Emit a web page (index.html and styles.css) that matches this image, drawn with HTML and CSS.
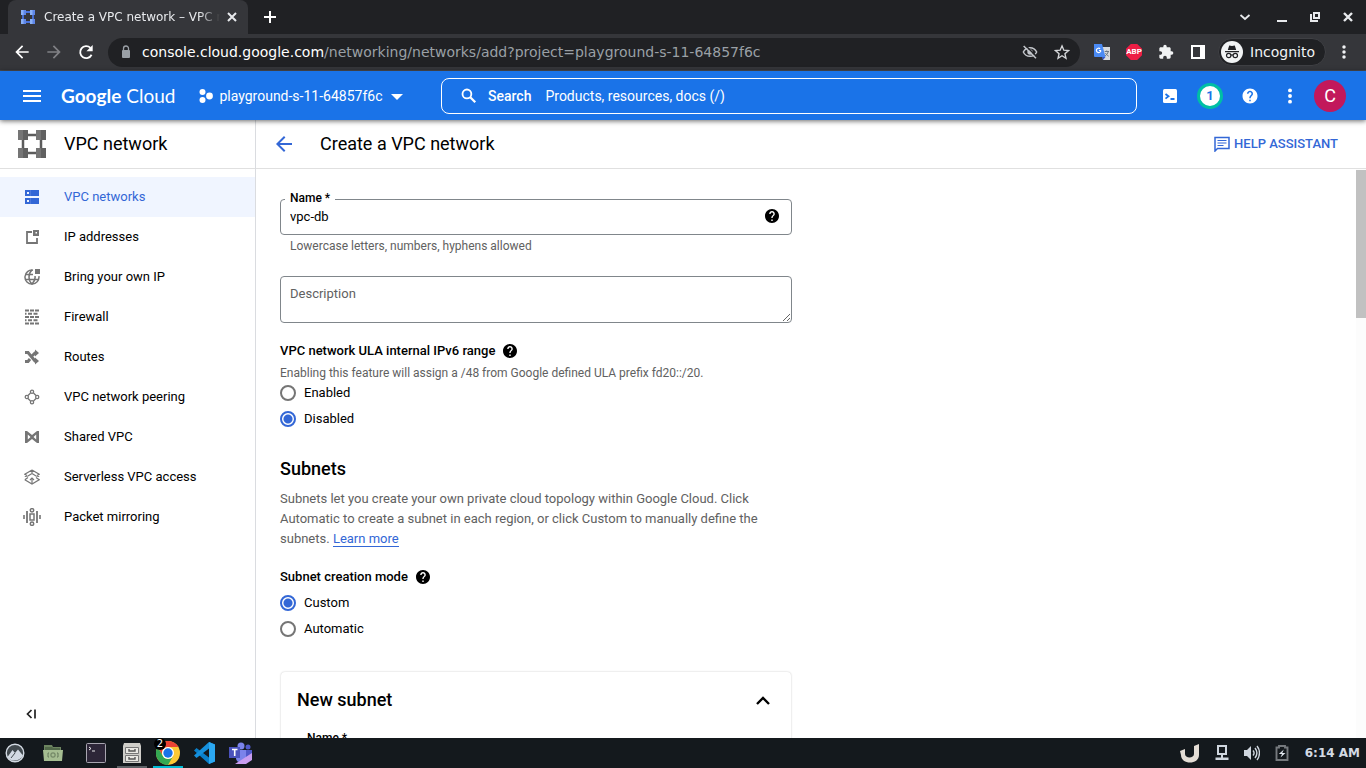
FILE: index.html
```html
<!DOCTYPE html>
<html lang="en">
<head>
<meta charset="utf-8">
<title>Create a VPC network – VPC network</title>
<link rel="stylesheet" href="styles.css">
</head>
<body>
<svg class="defs" aria-hidden="true">
  <symbol id="help" viewBox="0 0 24 24"><path d="M12 2C6.48 2 2 6.48 2 12s4.48 10 10 10 10-4.48 10-10S17.52 2 12 2zm1 17h-2v-2h2v2zm2.07-7.75-.9.92C13.45 12.9 13 13.5 13 15h-2v-.5c0-1.1.45-2.1 1.17-2.83l1.24-1.26c.37-.36.59-.86.59-1.41 0-1.1-.9-2-2-2s-2 .9-2 2H8c0-2.21 1.79-4 4-4s4 1.79 4 4c0 .88-.36 1.68-.93 2.25z" fill="currentColor" stroke="none"/></symbol>
  <symbol id="help-tight" viewBox="2 2 20 20"><path d="M12 2C6.48 2 2 6.48 2 12s4.48 10 10 10 10-4.48 10-10S17.52 2 12 2zm1 17h-2v-2h2v2zm2.07-7.75-.9.92C13.45 12.9 13 13.5 13 15h-2v-.5c0-1.1.45-2.1 1.17-2.83l1.24-1.26c.37-.36.59-.86.59-1.41 0-1.1-.9-2-2-2s-2 .9-2 2H8c0-2.21 1.79-4 4-4s4 1.79 4 4c0 .88-.36 1.68-.93 2.25z"/></symbol>
  <symbol id="back" viewBox="0 0 24 24"><path d="M20 11H7.83l5.59-5.59L12 4l-8 8 8 8 1.41-1.41L7.83 13H20z"/></symbol>
  <symbol id="dots" viewBox="0 0 24 24"><circle cx="12" cy="4.500" r="2.600"/><circle cx="12" cy="12" r="2.600"/><circle cx="12" cy="19.500" r="2.600"/></symbol>
</svg>

<div class="tabstrip">
  <div class="tab">
    <svg class="i16" viewBox="0 0 16 16"><path d="M3 3h10v10H3z" fill="none" stroke="#4a72dc" stroke-width="1.800"/><g fill="#8ab0f7"><path d="M1 1h5v5H1zM10 1h5v5h-5zM1 10h5v5H1zM10 10h5v5h-5z"/></g><g fill="#5f87e8"><path d="M3.500 1H6v5H3.500zM12.500 1H15v5h-2.500zM3.500 10H6v5H3.500zM12.500 10H15v5h-2.500z"/></g></svg>
    <span class="tab-title">Create a VPC network – VPC network</span>
    <button class="bare" aria-label="Close tab"><svg class="i12" viewBox="0 0 12 12"><path d="m2 2 8 8M10 2l-8 8" fill="none" stroke="#e8eaed" stroke-width="2"/></svg></button>
  </div>
  <button class="bare new-tab" aria-label="New tab"><svg class="i12" viewBox="0 0 12 12"><path d="M6 0v12M0 6h12" fill="none" stroke="#fff" stroke-width="2"/></svg></button>
  <div class="window-buttons">
    <button class="bare tab-search" aria-label="Search tabs"><svg class="i12" viewBox="0 0 12 12"><path d="m1.500 4 4.500 4 4.500-4" fill="none" stroke="#e8eaed" stroke-width="1.800"/></svg></button>
    <button class="bare" aria-label="Minimize"><svg class="i12" viewBox="0 0 12 12"><path d="M1 9h10v2H1z"/></svg></button>
    <button class="bare" aria-label="Restore"><svg class="i12" viewBox="0 0 12 12"><path d="M2 3v7h7" fill="none" stroke="#e8eaed" stroke-width="2"/><path d="M5 2h5v5H5z" fill="none" stroke="#e8eaed" stroke-width="2"/></svg></button>
    <button class="bare" aria-label="Close"><svg class="i12" viewBox="0 0 12 12"><path d="m2 2 8 8M10 2l-8 8" fill="none" stroke="#e8eaed" stroke-width="2.400"/></svg></button>
  </div>
</div>

<div class="toolbar">
  <div class="nav-buttons">
    <button class="bare" aria-label="Back"><svg class="i20" viewBox="0 0 24 24"><use href="#back"/></svg></button>
    <button class="bare dim" aria-label="Forward"><svg class="i20" viewBox="0 0 24 24"><path d="M4 11h12.170l-5.590-5.590L12 4l8 8-8 8-1.410-1.410L16.170 13H4z"/></svg></button>
    <button class="bare" aria-label="Reload"><svg class="i20" viewBox="0 0 24 24"><path d="M18.700 15.300A7.200 7.200 0 1 1 17.300 7" fill="none" stroke="#fff" stroke-width="2.200"/><path d="M20 3.500V11h-7.500z" fill="#fff"/></svg></button>
  </div>
  <div class="address">
    <svg class="i16" viewBox="0 0 16 16"><path d="M5 6h6a1 1 0 0 1 1 1v6a1 1 0 0 1-1 1H5a1 1 0 0 1-1-1V7a1 1 0 0 1 1-1z" fill="#9aa0a6"/><path d="M5.500 7V4.500a2.500 2.500 0 0 1 5 0V7" fill="none" stroke="#9aa0a6" stroke-width="1.300"/></svg>
    <span class="url"><b>console.cloud.google.com</b>/networking/networks/add?project=playground-s-11-64857f6c</span>
    <button class="bare muted" aria-label="Third-party cookies blocked"><svg class="i16" viewBox="0 0 24 24"><path d="M12 5.500c4.500 0 8.200 2.600 10 6.500-1.800 3.900-5.500 6.500-10 6.500S3.800 15.900 2 12c1.800-3.900 5.500-6.500 10-6.500z" fill="none" stroke="#c4c7cc" stroke-width="2.200"/><circle cx="12" cy="12" r="4"/><path d="m4.500 1.500 18 18" stroke="#202124" stroke-width="2.500"/><path d="m2.500 3 18.500 18.500" stroke="#c4c7cc" stroke-width="2.200"/></svg></button>
    <button class="bare muted" aria-label="Bookmark this tab"><svg class="i16" viewBox="0 0 24 24"><path d="m12 2.800 2.700 6.500 7 .600-5.300 4.600 1.600 6.900-6-3.700-6 3.700 1.600-6.900-5.300-4.600 7-.600z" fill="none" stroke="#d5d7da" stroke-width="2"/></svg></button>
  </div>
  <div class="extensions">
    <button class="bare" aria-label="Translate"><svg class="i16" viewBox="0 0 16 16"><path d="M7 3h9v13H9z" fill="#d8dadd"/><path d="M0 0h8l3.500 13H1a1 1 0 0 1-1-1z" fill="#4a8af4"/><path d="M8 13h3.500L9 16z" fill="#3457c8"/><path d="M6.800 6.400a2.200 2.200 0 1 1-.7-1.600M7 6.500H5" fill="none" stroke="#fff" stroke-width="1.200"/><path d="M10.700 7.500h4.300M12.700 6.500v1M14.200 7.700c-.5 2-1.500 3.200-3 4M11.500 9c.7 1.500 1.500 2.300 3.200 3.200" fill="none" stroke="#6b7784"/></svg></button>
    <button class="bare abp" aria-label="Adblock Plus">ABP</button>
    <button class="bare" aria-label="Extensions"><svg class="i16" viewBox="0 0 24 24"><path d="M20.500 11H19V7c0-1.100-.9-2-2-2h-4V3.500a2.500 2.500 0 0 0-5 0V5H4c-1.100 0-1.990.9-1.990 2v3.800H3.500c1.490 0 2.700 1.210 2.700 2.700s-1.210 2.700-2.700 2.700H2V20c0 1.100.9 2 2 2h3.800v-1.500c0-1.490 1.210-2.700 2.700-2.700s2.700 1.210 2.700 2.700V22H17c1.100 0 2-.9 2-2v-4h1.500a2.500 2.500 0 0 0 0-5z"/></svg></button>
    <button class="bare" aria-label="Side panel"><svg class="i16" viewBox="0 0 16 16"><path d="M2 2h12v12H2z" fill="none" stroke="#fff" stroke-width="2"/><path d="M10 2h4v12h-4z" fill="#fff"/></svg></button>
  </div>
  <button class="bare incognito"><svg class="i22" viewBox="0 0 22 22"><circle cx="11" cy="11" r="11" fill="#f1f3f4"/><path d="M4 10h14v1.200H4zM6.800 9l1.400-4.500 2.800.6 2.800-.6L15.200 9z" fill="#202124"/><g fill="none" stroke="#202124" stroke-width="1.200"><circle cx="7.700" cy="14.500" r="2.200"/><circle cx="14.300" cy="14.500" r="2.200"/><path d="M9.900 14.200c.800-.5 1.400-.5 2.200 0"/></g></svg>Incognito</button>
  <button class="bare" aria-label="Browser menu"><svg class="i16" viewBox="0 0 24 24"><use href="#dots"/></svg></button>
</div>

<header class="app-bar">
  <div class="brand">
    <button class="bare" aria-label="Navigation menu"><svg class="i24" viewBox="0 0 24 24"><path d="M3 6h18v2H3zM3 11h18v2H3zM3 16h18v2H3z"/></svg></button>
    <a class="logo" href="#"><b>Google</b> Cloud</a>
    <button class="bare project"><svg class="i16" viewBox="0 0 16 16"><circle cx="4.500" cy="4" r="3"/><circle cx="4.500" cy="12" r="3"/><circle cx="11.500" cy="8" r="3.400"/></svg>playground-s-11-64857f6c<svg class="i12" viewBox="0 0 12 12"><path d="M0 4h12L6 10z"/></svg></button>
  </div>
  <div class="search">
    <svg class="i20" viewBox="0 0 24 24"><circle cx="9.500" cy="9.500" r="5.300" fill="none" stroke="#fff" stroke-width="2.200"/><path d="m13.500 13.500 6 6" stroke="#fff" stroke-width="2.800"/></svg>
    <label for="search">Search</label>
    <input id="search" type="text" placeholder="Products, resources, docs (/)">
  </div>
  <div class="actions">
    <button class="bare" aria-label="Cloud Shell"><svg class="i18" viewBox="0 0 18 18"><rect x="2" y="2" width="14" height="14" rx="1.500"/><path d="m4.500 7 3 2.300-3 2.300M9.500 12h4" fill="none" stroke="#1a73e8" stroke-width="1.800"/></svg></button>
    <button class="bare" aria-label="Notifications"><span class="count">1</span></button>
    <button class="bare" aria-label="Help"><svg class="i18" viewBox="0 0 24 24"><use href="#help"/></svg></button>
    <button class="bare" aria-label="More options"><svg class="i18" viewBox="0 0 24 24"><use href="#dots"/></svg></button>
    <button class="bare" aria-label="Account"><span class="avatar">C</span></button>
  </div>
</header>

<div class="workspace">
  <aside class="sidebar">
    <div class="product">
      <svg class="i28" viewBox="0 0 28 28"><path d="M5 5h18v18H5z" fill="none" stroke="#5c5c5c" stroke-width="2.500"/><path d="M0 0h10v10H0zM18 0h10v10H18zM0 18h10v10H0zM18 18h10v10H18z" fill="#757575"/><path d="M5 0h5v10H5zM23 0h5v10h-5zM5 18h5v10H5zM23 18h5v10h-5z" fill="#616161"/></svg>
      <span>VPC network</span>
    </div>
    <nav class="menu">
      <a class="active" href="#"><svg class="i16" viewBox="0 0 16 16"><path fill-rule="evenodd" d="M1 1h14v6H1zM3 3v2h2V3zM1 9h14v6H1zM3 11v2h2v-2z"/><path d="M6.500 1v6M6.500 9v6" stroke="#4c79dc" stroke-width="1"/></svg>VPC networks</a>
      <a href="#"><svg class="i16" viewBox="0 0 16 16"><path d="M8 3H3v11h10V9" fill="none" stroke="#757575" stroke-width="1.800"/><path fill-rule="evenodd" d="M9 1h6v6H9zM11.500 3v1.500H13V3z"/></svg>IP addresses</a>
      <a href="#"><svg class="i16" viewBox="0 0 16 16"><g fill="none" stroke="#757575" stroke-width="1.500"><path d="M9 1.200a7 7 0 1 0 5.900 6"/><path d="M8 1c-4 3.500-4 10.500 0 14 2.500-2.500 3.500-5 3-8M1.500 5.500H9M1.500 10.500h13"/></g><path d="M11 0h5v5h-5z"/></svg>Bring your own IP</a>
      <a href="#"><svg class="i16" viewBox="0 0 16 16"><path d="M1 1.500h4M6 1.500h4M11 1.500h4M1 4.800h1.500M4 4.800h4M9.500 4.800h4M1 8h4M6 8h4M11 8h4M1 11.200h1.500M4 11.200h4M9.500 11.200h4M1 14.500h4M6 14.500h4M11 14.500h4" fill="none" stroke="#757575" stroke-width="1.900"/></svg>Firewall</a>
      <a href="#"><svg class="i16" viewBox="0 0 16 16"><path d="M1 3.500h3l7 8.500h1M1 12.500h3l2-2.500M8.500 6.500 11 4h1" fill="none" stroke="#757575" stroke-width="3"/><path d="m11 .5 4 3.500-4 3.500zM11 8.500l4 3.500-4 3.500z"/></svg>Routes</a>
      <a href="#"><svg class="i16" viewBox="0 0 16 16"><g fill="none" stroke="#757575" stroke-width="1.300"><circle cx="8" cy="2.800" r="1.600"/><circle cx="8" cy="13.200" r="1.600"/><circle cx="2.800" cy="8" r="1.600"/><circle cx="13.200" cy="8" r="1.600"/><path d="M6.500 4 4 6.500M9.500 4 12 6.500M4 9.500 6.500 12M12 9.500 9.500 12"/></g></svg>VPC network peering</a>
      <a href="#"><svg class="i16" viewBox="0 0 16 16"><path fill-rule="evenodd" d="M1 2h2l5 4 5-4h2v12h-2l-5-4-5 4H1zM3.800 5.500v5L6.500 8zM12.200 5.500v5L9.500 8z"/></svg>Shared VPC</a>
      <a href="#"><svg class="i16" viewBox="0 0 16 16"><g fill="none" stroke="#757575" stroke-width="1.200"><path d="M8 1 .8 5.300 3 6.500M8 1l7.200 4.300L13 6.500M.8 10.700 8 15l7.200-4.300L12 8.500M.8 10.700 4 8.500M.8 7.500 4 7l4-2.500L12 7l3.200.5M8 1v3.500M8 14V9"/><path d="M6 11l2-2 2 2"/></g></svg>Serverless VPC access</a>
      <a href="#"><svg class="i18" viewBox="0 0 18 18"><g fill="none" stroke="#757575"><path d="M1 7v4M17 7v4" stroke-width="1.600"/><path d="M4 3v12M14 3v12" stroke-width="1.800"/><rect x="7" y="6" width="4" height="6" stroke-width="1.500"/><circle cx="9" cy="2.300" r="1.700" stroke-width="1.500"/><circle cx="9" cy="15.700" r="1.700" stroke-width="1.500"/></g></svg>Packet mirroring</a>
    </nav>
    <button class="bare collapse" aria-label="Collapse menu"><svg class="i12" viewBox="0 0 12 12"><path d="M6.500 2 2.500 6l4 4M10 1.500v9" fill="none" stroke="#212121" stroke-width="1.700"/></svg></button>
  </aside>

  <main class="main">
    <div class="page-head">
      <button class="bare" aria-label="Go back"><svg class="i24" viewBox="0 0 24 24"><use href="#back"/></svg></button>
      <h1>Create a VPC network</h1>
      <button class="bare assist"><svg class="i16" viewBox="0 0 16 16"><path d="M1 1.500h14v11H3.500L1 15z" fill="none" stroke="#3367d6" stroke-width="1.500"/><path d="M3.500 4.500h9M3.500 7h9M3.500 9.500h6" stroke="#3367d6" stroke-width="1.200"/></svg>HELP ASSISTANT</button>
    </div>
    <div class="scroller">
      <form class="form">
        <div class="field">
          <label for="name">Name *</label>
          <input id="name" type="text" value="vpc-db">
          <svg class="i14 field-help"><use href="#help-tight"/></svg>
        </div>
        <p class="hint">Lowercase letters, numbers, hyphens allowed</p>
        <textarea class="description" aria-label="Description" placeholder="Description"></textarea>

        <fieldset>
          <legend>VPC network ULA internal IPv6 range <svg class="i14"><use href="#help-tight"/></svg></legend>
          <p class="note">Enabling this feature will assign a /48 from Google defined ULA prefix fd20::/20.</p>
          <label class="option"><input type="radio" name="ula"> Enabled</label>
          <label class="option"><input type="radio" name="ula" checked> Disabled</label>
        </fieldset>

        <h2 class="section">Subnets</h2>
        <p class="text">Subnets let you create your own private cloud topology within Google Cloud. Click Automatic to create a subnet in each region, or click Custom to manually define the subnets. <a href="#">Learn more</a></p>

        <fieldset>
          <legend>Subnet creation mode <svg class="i14"><use href="#help-tight"/></svg></legend>
          <label class="option"><input type="radio" name="mode" checked> Custom</label>
          <label class="option"><input type="radio" name="mode"> Automatic</label>
        </fieldset>

        <section class="card">
          <div class="card-head">
            <h2>New subnet</h2>
            <button type="button" class="bare" aria-label="Collapse subnet"><svg class="i24" viewBox="0 0 24 24"><path d="m6 16 6-6 6 6" fill="none" stroke="#000" stroke-width="2.400"/></svg></button>
          </div>
          <div class="field">
            <label for="subnet-name">Name *</label>
            <input id="subnet-name" type="text">
          </div>
        </section>
      </form>
      <div class="scrollbar"><div class="thumb"></div></div>
    </div>
  </main>
</div>

<footer class="taskbar">
  <button class="bare start" aria-label="Menu"><svg class="i20" viewBox="0 0 20 20"><circle cx="10" cy="10" r="8.800" fill="#41494e" stroke="#d3dae3" stroke-width="1.400"/><path d="m2.500 14 5-7 2.500 3 3-3.500 5 6c-3 6-12 7-15.500 1.500z" fill="#d3dae3"/><path d="m6 15 4-5" stroke="#41494e" stroke-width="1"/></svg></button>
  <button class="bare files" aria-label="Files"><svg class="i20" viewBox="0 0 20 20"><path d="M1 2h8l1 2h8v14H1z" fill="#6d8560"/><path d="M2 4h7l1 1h7v2H2z" fill="#52694a"/><path d="M0 7h20l-1 11H1z" fill="#a5bd91"/><path d="M6 10H5v4h1M14 10h1v4h-1" fill="none" stroke="#65795a"/><rect x="8" y="10" width="4" height="4" rx="1" fill="none" stroke="#65795a"/></svg></button>
  <div class="tasks">
    <button class="bare" aria-label="Terminal"><svg class="i20" viewBox="0 0 20 20"><rect x=".5" y=".5" width="19" height="19" rx="1" fill="#2d2638" stroke="#a8a5b0"/><path d="m3 4 2 1.500L3 7M6 8h3" fill="none" stroke="#fff" stroke-width=".9"/></svg></button>
    <button class="bare open" aria-label="File manager"><svg class="i20" viewBox="0 0 20 20"><path d="M2 0h16l1 3v17H1V3z" fill="#cfcec9"/><g fill="#e9e8e3" stroke="#777"><path d="M3.500 4.500h13v6h-13zM3.500 12.500h13v6h-13z"/></g><path d="M7 6v2h6V6M7 14v2h6v-2" fill="none" stroke="#555" stroke-width="1.400"/></svg></button>
    <button class="bare open current" aria-label="Chrome, 2 windows"><svg class="i24" viewBox="0 0 24 24"><circle cx="12" cy="12" r="12" fill="#fcc934"/><path d="M1.600 6a12 12 0 0 1 20.800 0H12a6 6 0 0 0-5.200 9z" fill="#ea4335"/><path d="M1.600 6 6.800 15A6 6 0 0 0 17.200 15L12 24A12 12 0 0 1 1.600 6z" fill="#34a853"/><circle cx="12" cy="12" r="6" fill="#fff"/><circle cx="12" cy="12" r="4.700" fill="#1a73e8"/></svg><span class="badge">2</span></button>
    <button class="bare" aria-label="Visual Studio Code"><svg class="i22" viewBox="0 0 22 22"><path fill-rule="evenodd" d="m16 0 6 2.500v17L16 22 1 8.500 3.500 6 16 15.500z" fill="#0a7fc9"/><path d="M16 0v6.500L3.500 16 1 13.500z" fill="#1590dd"/><path d="m16 0 6 2.500v17L16 22z" fill="#2ba8f1"/></svg></button>
    <button class="bare" aria-label="Teams"><svg class="i24" viewBox="0 0 24 24"><circle cx="13" cy="5" r="3.500" fill="#7b83eb"/><circle cx="20" cy="6" r="2.500" fill="#5059c9"/><path d="M16 9h8v7c0 3-4 5-7 3z" fill="#5059c9"/><path d="M8 9h10v8c0 6-10 6-10 0z" fill="#7b83eb"/><path d="M1 6h11v11H1z" fill="#4b53bc"/><path d="M4 8.500h5.500M6.700 8.500v6.500" stroke="#fff" stroke-width="1.600"/><path d="m7 23 17-11v7l-6 4z" fill="#c99df0"/></svg></button>
  </div>
  <div class="tray">
    <svg class="i20" viewBox="0 0 20 20"><path d="M0 8l5-2v5c0 4.500 9 4.500 9 0V3l5-2v11c0 10-18 10-18 0z" fill="#e4ddd5"/></svg>
    <svg class="i16" viewBox="0 0 16 16"><path d="M4 1h8v8H4z" fill="none" stroke="#cfd6de" stroke-width="2"/><path d="M7 10h2v3H7zM1.500 12.500h13V15h-13z" fill="#cfd6de"/></svg>
    <svg class="i16" viewBox="0 0 16 16"><path d="M0 5h3l4-4v14l-4-4H0z" fill="#cfd6de"/><path d="M9 5.500c1.300 1.500 1.300 3.500 0 5M11 3c2.300 3 2.300 7 0 10M13 1c3.300 4 3.300 10 0 14" fill="none" stroke="#cfd6de" stroke-width="1.400"/></svg>
    <svg class="i16" viewBox="0 0 16 16"><path d="M3 2.500h2V1h6v1.500h2.500V15h-11V2.500z" fill="none" stroke="#75797d" stroke-width="1.900"/><path d="M9.800 4.500 4.800 9H8l-1.500 3.500L11.500 8H8.300z" fill="#dfe5ec"/></svg>
    <time>6:14 AM</time>
  </div>
</footer>
</body>
</html>
```
FILE: styles.css
```css
* { box-sizing: border-box; }

body {
  margin: 0;
  height: 100vh;
  display: flex;
  flex-direction: column;
  overflow: hidden;
  font: 13px/20px Roboto, "Liberation Sans", sans-serif;
  color: #000;
  background: #fff;
}

h1, h2, p { margin: 0; font-weight: 400; }
a { color: inherit; text-decoration: none; }
svg { display: block; flex: none; fill: currentColor; }
.defs { display: none; }

.i12 { width: 12px; height: 12px; }
.i14 { width: 14px; height: 14px; }
.i16 { width: 16px; height: 16px; }
.i18 { width: 18px; height: 18px; }
.i20 { width: 20px; height: 20px; }
.i22 { width: 22px; height: 22px; }
.i24 { width: 24px; height: 24px; }
.i28 { width: 28px; height: 28px; }

.bare {
  display: flex;
  align-items: center;
  justify-content: center;
  flex: none;
  padding: 0;
  border: 0;
  background: none;
  color: inherit;
  font: inherit;
}

/* Browser tabs */
.tabstrip {
  display: flex;
  align-items: center;
  flex: none;
  height: 34px;
  padding: 0 12px 0 8px;
  background: #202124;
  color: #e8eaed;
  font: 12px/16px "DejaVu Sans", sans-serif;
}
.tab {
  display: flex;
  align-items: center;
  width: 240px;
  height: 34px;
  padding: 0 10px 0 12px;
  border-radius: 8px 8px 0 0;
  background: #35363a;
}
.tab-title {
  flex: 1;
  min-width: 0;
  margin: 0 6px 0 8px;
  overflow: hidden;
  white-space: nowrap;
  -webkit-mask-image: linear-gradient(90deg, #000 88%, transparent);
  mask-image: linear-gradient(90deg, #000 88%, transparent);
}
.new-tab { margin-left: 16px; color: #fff; }
.window-buttons { display: flex; gap: 21px; margin-left: auto; }
.tab-search { margin-right: 4px; }

/* Browser toolbar */
.toolbar {
  display: flex;
  align-items: center;
  flex: none;
  height: 37px;
  padding: 0 14px 0 12px;
  border-bottom: 1px solid #4b4c50;
  background: #35363a;
  color: #f1f3f4;
  font: 14px/20px "DejaVu Sans", sans-serif;
}
.nav-buttons { display: flex; gap: 12px; color: #fff; }
.dim { color: #808185; }
.address {
  display: flex;
  align-items: center;
  flex: 1;
  min-width: 0;
  gap: 16px;
  height: 29px;
  margin: 0 14px 0 12px;
  padding: 0 10px;
  border-radius: 16px;
  background: #202124;
}
.url {
  flex: 1;
  min-width: 0;
  margin-left: -8px;
  overflow: hidden;
  white-space: nowrap;
  color: #9aa0a6;
}
.url b { font-weight: 400; color: #fff; }
.muted { color: #c4c7cc; }
.extensions { display: flex; align-items: center; gap: 16px; margin-right: 12px; }
.abp {
  width: 16px;
  height: 16px;
  background: #ed1e45;
  clip-path: polygon(30% 0, 70% 0, 100% 30%, 100% 70%, 70% 100%, 30% 100%, 0 70%, 0 30%);
  color: #fff;
  font: 700 8px/16px Roboto, sans-serif;
}
.incognito {
  gap: 7px;
  height: 28px;
  margin-right: 10px;
  padding: 0 10px 0 2px;
  border: 1px solid #3f4044;
  border-radius: 14px;
  background: #202124;
}

/* Console header */
.app-bar {
  position: relative;
  display: flex;
  align-items: center;
  flex: none;
  height: 49px;
  padding-right: 16px;
  background: #1a73e8;
  box-shadow: 0 1px 5px rgba(0, 0, 0, .6);
  color: #fff;
}
.brand { display: flex; align-items: center; flex: none; width: 441px; padding-left: 20px; }
.logo { margin: 0 23px 0 17px; font: 19px/24px Lato, sans-serif; white-space: nowrap; }
.logo b { font-weight: 700; }
.project { gap: 5px; font-size: 14px; }
.project .i12 { margin-left: 4px; }
.search {
  display: flex;
  align-items: center;
  flex: 1;
  min-width: 0;
  height: 36px;
  margin-right: 13px;
  padding: 0 17px;
  border: 1px solid #fff;
  border-radius: 8px;
  font-size: 14px;
}
.search label { margin: 0 14px 0 9px; font-weight: 500; }
.search input {
  flex: 1;
  min-width: 0;
  padding: 0;
  border: 0;
  outline: 0;
  background: none;
  color: inherit;
  font: inherit;
}
.search input::placeholder { color: #fff; }
.actions { display: flex; }
.actions .bare { width: 40px; height: 40px; }
.count {
  width: 26px;
  height: 26px;
  border: 3px solid #00bfa5;
  border-radius: 50%;
  background: #fff;
  color: #1a73e8;
  font: 700 13px/20px Roboto, sans-serif;
}
.avatar {
  width: 32px;
  height: 32px;
  border-radius: 50%;
  background: #c2185b;
  font-size: 18px;
  line-height: 32px;
}

/* Workspace */
.workspace { display: flex; flex: 1; min-height: 0; }
.sidebar {
  display: flex;
  flex-direction: column;
  flex: none;
  width: 256px;
  border-right: 1px solid #dadce0;
}
.product {
  display: flex;
  align-items: center;
  gap: 18px;
  height: 49px;
  padding-left: 18px;
  border-bottom: 1px solid #e0e0e0;
  font-size: 18px;
}
.menu { padding-top: 8px; }
.menu a { display: flex; align-items: center; height: 40px; padding-left: 24px; }
.menu svg { margin-right: 24px; color: #757575; }
.menu .i18 { margin: 0 23px 0 -1px; }
.menu .active { background: #f0f5ff; color: #3367d6; }
.menu .active svg { color: #3367d6; }
.collapse { align-self: flex-start; margin: auto 0 18px 25px; }

.main { display: flex; flex-direction: column; flex: 1; min-width: 0; }
.page-head {
  display: flex;
  align-items: center;
  flex: none;
  height: 49px;
  padding: 0 28px 0 16px;
  border-bottom: 1px solid #e0e0e0;
  color: #3367d6;
}
.page-head h1 { margin-left: 24px; font-size: 18px; color: #000; }
.assist { gap: 4px; margin-left: auto; font-weight: 500; }
.scroller { display: flex; justify-content: space-between; flex: 1; min-height: 0; overflow: hidden; }
.scrollbar { flex: none; width: 10px; padding-top: 1px; background: #fcfcfc; }
.thumb { height: 148px; background: #c1c1c1; }

/* Form */
.form { width: 536px; padding: 30px 0 0 24px; }
.field { position: relative; }
.field label {
  position: absolute;
  top: -11px;
  left: 5px;
  padding: 0 5px;
  background: #fff;
  font-size: 12px;
  font-weight: 500;
}
.field input, .description {
  display: block;
  width: 100%;
  border: 1px solid #80868b;
  border-radius: 4px;
  outline: 0;
  background: #fff;
  color: #000;
  font: inherit;
}
.field input { height: 36px; padding: 0 40px 2px 9px; }
.field-help { position: absolute; top: 10px; right: 13px; }
.hint, .note { color: #616161; font-size: 12px; }
.hint { margin-top: 1px; padding-left: 10px; }
.description { height: 47px; margin-top: 20px; padding: 7px 9px; resize: vertical; }
.description::placeholder { color: #616161; }
fieldset { margin: 18px 0 0; padding: 0; border: 0; }
legend {
  display: flex;
  align-items: center;
  gap: 8px;
  margin-bottom: 4px;
  padding: 0;
  font-weight: 500;
}
.note { line-height: 16px; }
.option { display: flex; align-items: center; gap: 8px; height: 24px; }
.option + .option { margin-top: 2px; }
.option input {
  width: 16px;
  height: 16px;
  margin: 0;
  appearance: none;
  border: 2px solid #757575;
  border-radius: 50%;
}
.option input:checked {
  border-color: #3367d6;
  background: radial-gradient(circle, #3367d6 4px, #fff 5px);
}
.section { margin: 26px 0 8px; }
.section, .card h2 { font-size: 18px; font-weight: 500; line-height: 24px; }
.text { color: #616161; }
.text a { border-bottom: 1px solid #3367d6; color: #3367d6; }
.card {
  margin: 31px 1px 0;
  padding: 16px;
  border-radius: 4px;
  box-shadow: 0 0 2px rgba(0, 0, 0, .24);
}
.card-head { display: flex; justify-content: space-between; margin-bottom: 27px; }

/* Desktop taskbar */
.taskbar {
  position: relative;
  display: flex;
  align-items: center;
  flex: none;
  height: 30px;
  padding-right: 6px;
  background: #14191d;
  color: #d3dae3;
}
.start { width: 30px; }
.files { width: 36px; margin: 0 7px 0 5px; }
.tasks { display: flex; }
.tasks .bare { position: relative; width: 36px; height: 30px; }
.open::after {
  content: "";
  position: absolute;
  right: 3px;
  bottom: 0;
  left: 3px;
  height: 2px;
  background: #5c6165;
}
.current::after { background: #00bcd4; }
.badge {
  position: absolute;
  top: 0;
  left: 4px;
  width: 12px;
  height: 12px;
  border-radius: 50%;
  background: #000;
  color: #fff;
  font: 10px/12px "DejaVu Sans", sans-serif;
}
.tray { display: flex; align-items: center; gap: 14px; margin-left: auto; }
.tray time { margin-left: 1px; font: 700 12px/16px "DejaVu Sans", sans-serif; }
```
